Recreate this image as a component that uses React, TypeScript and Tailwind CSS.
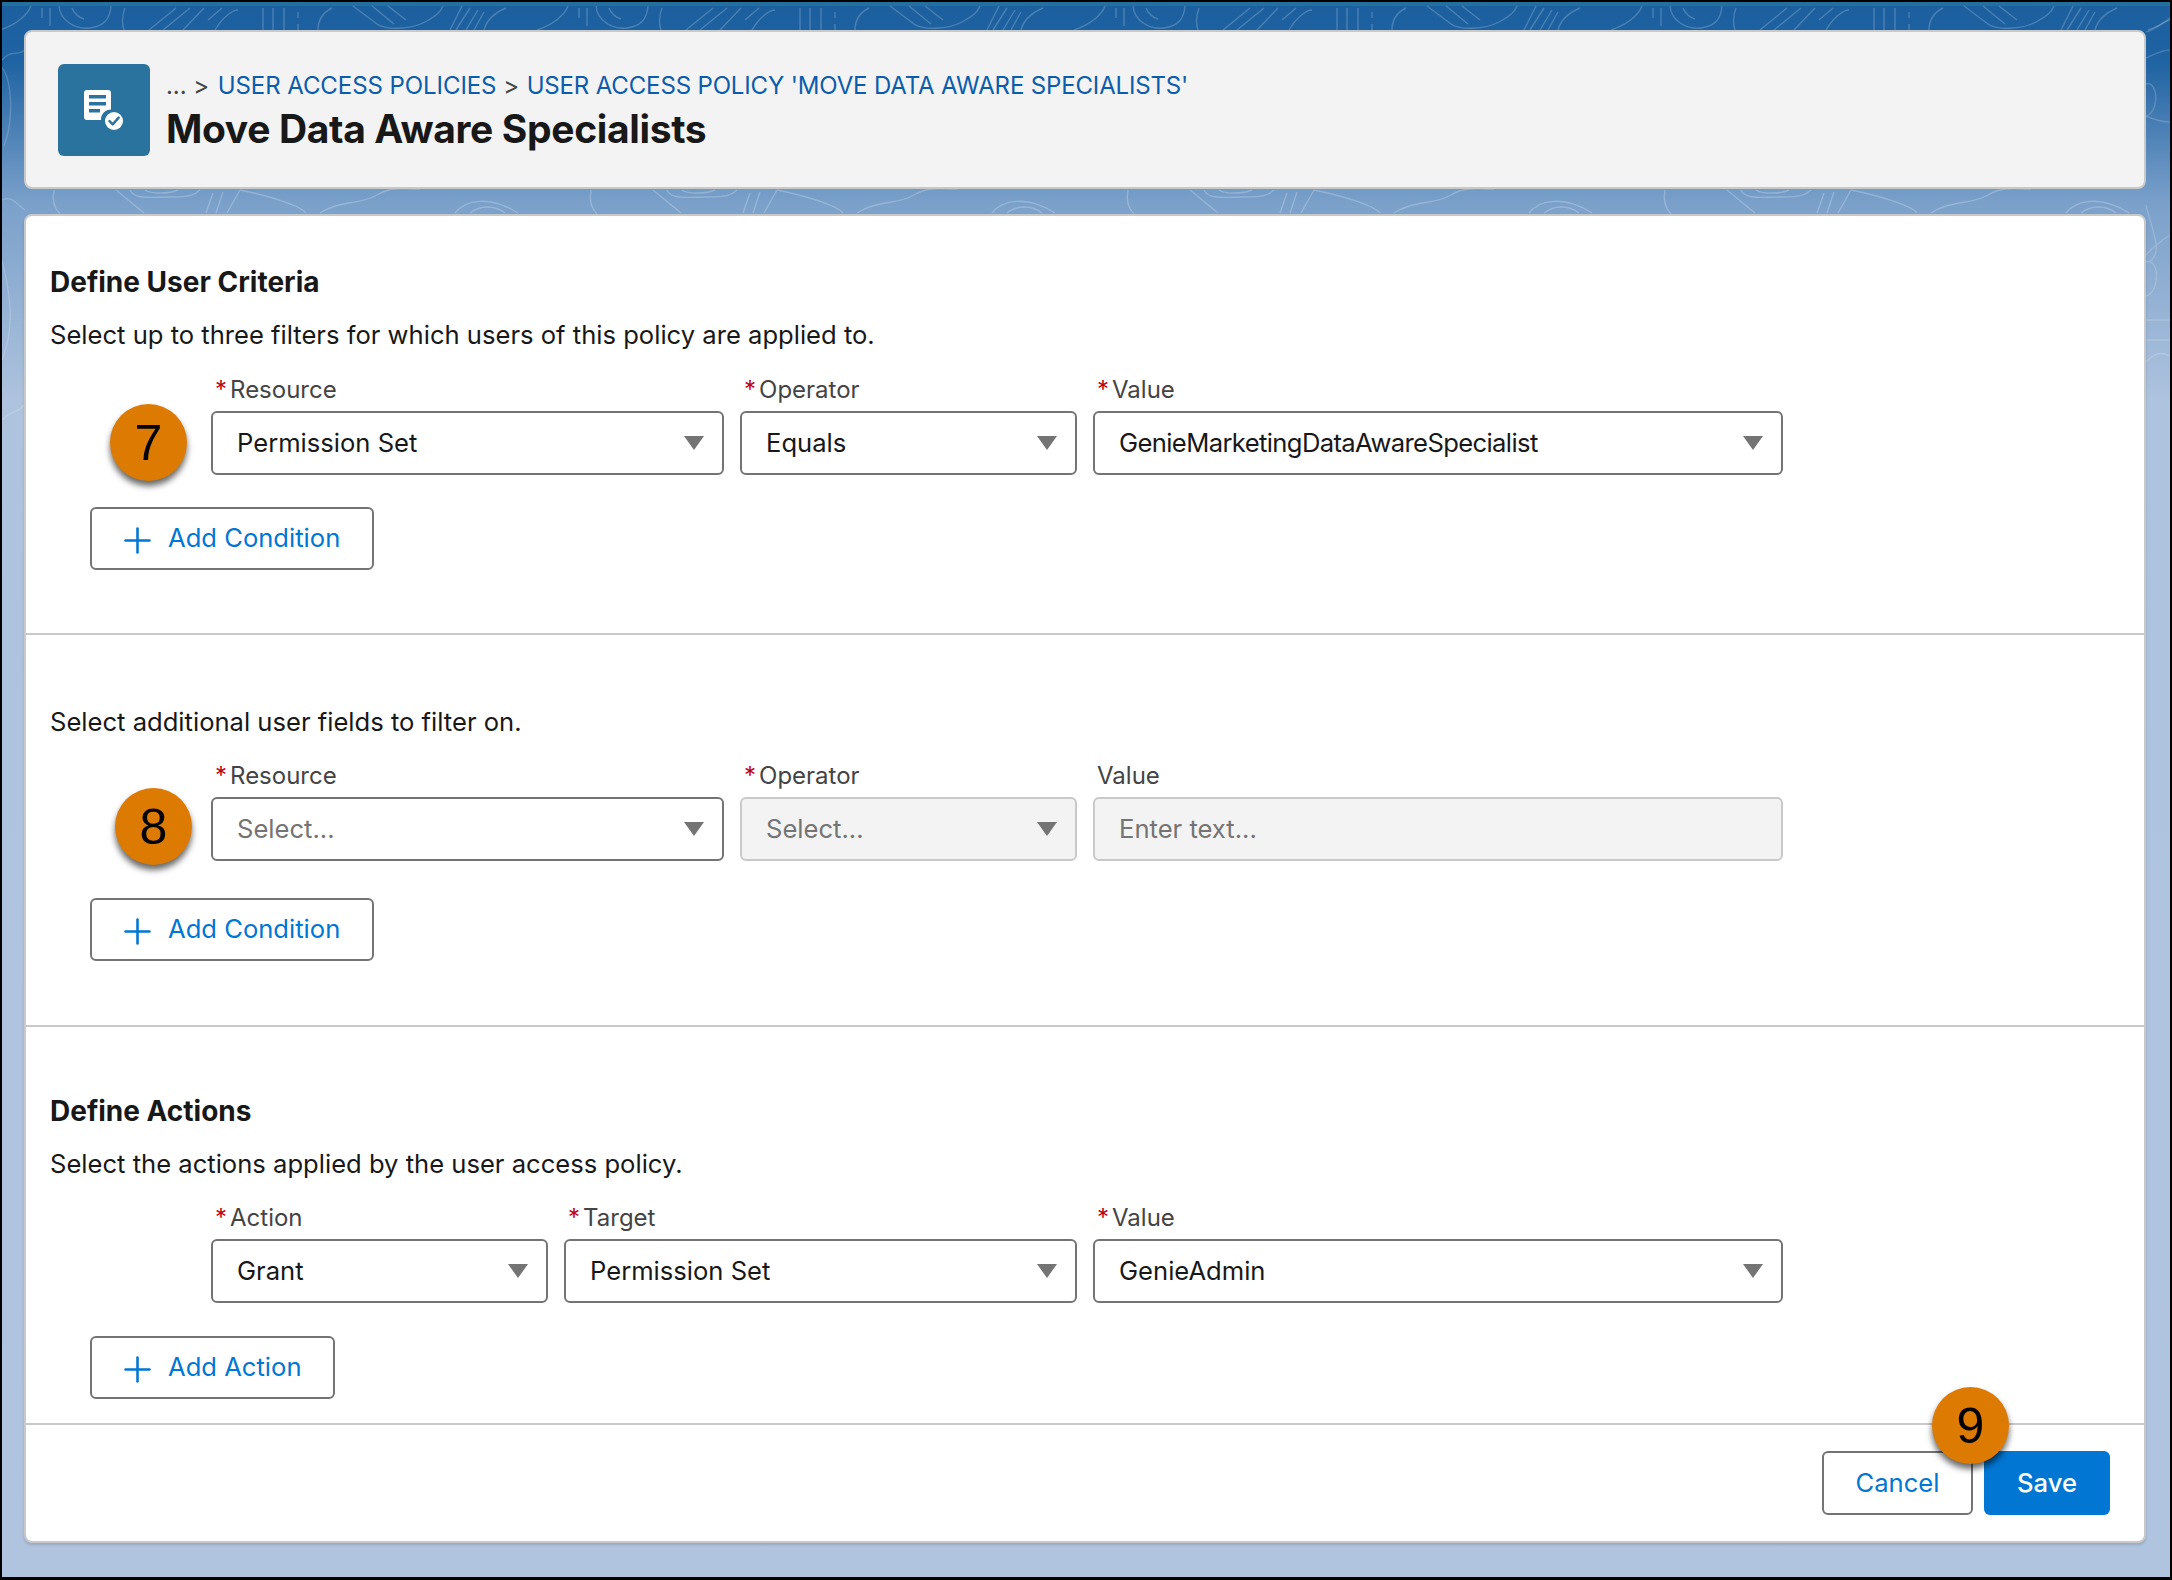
import { Plus } from "lucide-react";

const Caret = () => (
  <svg viewBox="0 0 20 14" className="h-[14px] w-[20px] shrink-0 fill-[#747474]">
    <path d="M0 0h20L10 14z" />
  </svg>
);

const Badge = ({ n, className }: { n: string; className: string }) => (
  <div className={`absolute flex h-[77px] w-[77px] items-center justify-center rounded-full bg-[#dd7a01] text-[50px] leading-none text-black shadow-[0_5px_6px_rgba(0,0,0,0.6)] font-['Liberation_Sans',sans-serif] ${className}`}>
    {n}
  </div>
);

type FieldProps = {
  label: string;
  value: string;
  width: string;
  required?: boolean;
  state?: "normal" | "placeholder" | "disabled" | "input";
  valueClass?: string;
};

const Field = ({ label, value, width, required = true, state = "normal", valueClass = "" }: FieldProps) => {
  const off = state === "disabled" || state === "input";
  return (
    <div className={width}>
      <div className="flex h-[37px] items-start pl-[4px] text-[24px] leading-[32px] text-[#444444]">
        {required && <span className="mr-[3px] text-[#ba0517]">*</span>}
        {label}
      </div>
      <div className={`flex h-[64px] items-center justify-between rounded-[6px] border-2 pl-[24px] pr-[18px] text-[25.6px] ${off ? "border-[#c9c9c9] bg-[#f3f3f3] text-[#747474]" : "border-[#747474] bg-white"} ${state === "placeholder" ? "text-[#747474]" : off ? "" : "text-[#181818]"}`}>
        <span className={valueClass}>{value}</span>
        {state !== "input" && <Caret />}
      </div>
    </div>
  );
};

const AddButton = ({ label, width }: { label: string; width: string }) => (
  <button className={`ml-[64px] flex h-[63px] items-center rounded-[6px] border-2 border-[#747474] bg-white pl-[25px] text-[25.6px] text-[#0176d3] ${width}`}>
    <Plus className="mr-[10px] h-[41px] w-[41px] translate-y-[2px]" strokeWidth={1.5} />
    {label}
  </button>
);

// faint contour lines behind the cards, tile repeats every 537px
const Topo = () => (
  <svg width="2172" height="700" fill="none" className="absolute top-[-2px] left-[-2px]">
    <defs>
      <pattern id="topo" width="537" height="700" patternUnits="userSpaceOnUse">
        <path
          stroke="rgba(255,255,255,0.2)"
          strokeWidth="1.4"
          d="M31 6C28 14 18 24 0 30M42 8V18M50 8V26M59 6C60 20 75 30 90 28S110 18 111 6M72 8C74 14 80 18 84 19M125 8C122 16 122 24 124 30M176 8L149 30M190 8L163 30M204 8L183 30M222 8L208 20M215 30C222 18 232 10 238 10M263 8V30M273 8V30M284 8V30M298 12V18M298 24V30M332 8C320 14 318 24 318 30M353 6L377 24C385 30 410 30 425 22S441 10 443 6M372 6L394 24M388 6L406 20M462 6L450 30M470 8L456 30M478 10L466 30M484 12L474 30M506 8C492 14 486 22 484 30"
        />
        <path
          stroke="rgba(255,255,255,0.22)"
          strokeWidth="1.4"
          d="M54 190C52 200 54 208 60 214M116 190L144 213M130 190C135 200 150 197 170 197S195 195 200 190M145 190C150 194 170 194 178 190M213 193L206 213M223 192L216 213M240 190L227 213M240 190C265 195 300 205 306 213M320 213C340 200 360 205 377 195S410 190 420 189M455 213C465 200 490 195 518 213M470 213C480 205 495 205 505 213"
        />
      </pattern>
    </defs>
    <rect width="2172" height="700" fill="url(#topo)" />
    <path
      stroke="rgba(255,255,255,0.18)"
      strokeWidth="1.4"
      d="M2 60C10 50 18 56 25 50M2 68C12 80 14 120 4 146M2 200C12 195 18 206 25 210M2 260C12 300 14 330 2 360M2 420C10 410 18 414 25 404M2146 32C2155 30 2162 22 2170 20M2146 58C2155 54 2162 50 2170 50M2146 84C2158 80 2160 112 2146 116C2155 120 2162 122 2170 122M2146 205C2155 240 2162 250 2150 262M2146 255C2155 245 2162 240 2170 235M2146 262C2160 258 2160 292 2146 296M2146 320H2170M2146 340H2170M2146 362C2155 352 2162 352 2170 356"
    />
  </svg>
);

export default function App() {
  return (
    <div className="relative h-[1580px] w-[2172px] overflow-hidden border-t-2 border-r-2 border-b-[3px] border-l-2 border-black bg-[linear-gradient(180deg,#1b5f9f_0px,#1f63a2_60px,#7aa0ca_200px,#aec3de_400px,#b0c4df_100%)] font-['Inter',sans-serif]">
      <div className="h-[4px] bg-[#23709f]" />
      <Topo />

      <div className="relative ml-[22px] mr-[24px] mt-[24px] flex flex-col gap-[25px]">
        {/* Header */}
        <div className="flex h-[159px] items-center rounded-[8px] border-2 border-[#c9c9c9] bg-[#f3f3f3] pl-[32px]">
          <div className="flex h-[92px] w-[92px] shrink-0 items-center justify-center rounded-[6px] bg-[#2a739e]">
            <svg viewBox="0 0 40 40" className="h-[40px] w-[40px] fill-white">
              <path d="M3 0h21a3 3 0 0 1 3 3v16.5a10 10 0 0 0-10 10.5H3a3 3 0 0 1-3-3V3a3 3 0 0 1 3-3z" />
              <path fill="#2a739e" d="M5 5h17v3.5H5zM5 12h17v3.5H5zM5 19h11v3.5H5z" />
              <circle cx="30" cy="31" r="9" />
              <path fill="none" stroke="#2a739e" strokeWidth="2.4" strokeLinecap="round" strokeLinejoin="round" d="M25.5 31l3.2 3.4 6-6.8" />
            </svg>
          </div>
          <div className="ml-[16px] mt-[2px]">
            <div className="text-[24px] leading-[36px] tracking-[-0.07px] text-[#444444]">
              ... &gt; <span className="ml-[2px] text-[#0b5cab]">USER ACCESS POLICIES</span> &gt;{" "}
              <span className="ml-[1px] tracking-[-0.15px] text-[#0b5cab]">USER ACCESS POLICY 'MOVE DATA AWARE SPECIALISTS'</span>
            </div>
            <h1 className="text-[39px] leading-[50px] font-bold tracking-[-0.35px] text-[#181818]">Move Data Aware Specialists</h1>
          </div>
        </div>

        {/* Form card */}
        <div className="h-[1329px] rounded-[8px] border-2 border-[#c9c9c9] bg-white shadow-[0_2px_3px_rgba(0,0,0,0.15)]">
          <section className="relative h-[419px] border-b-2 border-[#c9c9c9] pt-[48px]">
            <h2 className="ml-[24px] text-[28px] leading-[36px] font-bold text-[#181818]">Define User Criteria</h2>
            <p className="ml-[24px] mt-[17px] text-[25.6px] leading-[36px] text-[#181818]">Select up to three filters for which users of this policy are applied to.</p>
            <div className="ml-[185px] mt-[21px] flex gap-[16px]">
              <Field label="Resource" value="Permission Set" width="w-[513px]" />
              <Field label="Operator" value="Equals" width="w-[337px]" />
              <Field label="Value" value="GenieMarketingDataAwareSpecialist" width="w-[690px]" valueClass="tracking-[-0.62px]" />
            </div>
            <div className="mt-[32px]">
              <AddButton label="Add Condition" width="w-[284px]" />
            </div>
            <Badge n="7" className="top-[188px] left-[84px]" />
          </section>

          <section className="relative h-[392px] border-b-2 border-[#c9c9c9] pt-[69px]">
            <p className="ml-[24px] text-[25.6px] leading-[36px] text-[#181818]">Select additional user fields to filter on.</p>
            <div className="ml-[185px] mt-[20px] flex gap-[16px]">
              <Field label="Resource" value="Select..." width="w-[513px]" state="placeholder" />
              <Field label="Operator" value="Select..." width="w-[337px]" state="disabled" />
              <Field label="Value" value="Enter text..." width="w-[690px]" state="input" required={false} />
            </div>
            <div className="mt-[37px]">
              <AddButton label="Add Condition" width="w-[284px]" />
            </div>
            <Badge n="8" className="top-[153px] left-[89px]" />
          </section>

          <section className="h-[398px] border-b-2 border-[#c9c9c9] pt-[66px]">
            <h2 className="ml-[24px] text-[28px] leading-[36px] font-bold text-[#181818]">Define Actions</h2>
            <p className="ml-[24px] mt-[17px] text-[25.6px] leading-[36px] text-[#181818]">Select the actions applied by the user access policy.</p>
            <div className="ml-[185px] mt-[20px] flex gap-[16px]">
              <Field label="Action" value="Grant" width="w-[337px]" />
              <Field label="Target" value="Permission Set" width="w-[513px]" />
              <Field label="Value" value="GenieAdmin" width="w-[690px]" />
            </div>
            <div className="mt-[33px]">
              <AddButton label="Add Action" width="w-[245px]" />
            </div>
          </section>

          <footer className="relative flex justify-end gap-[11px] pt-[26px] pr-[34px]">
            <button className="h-[64px] w-[151px] rounded-[6px] border-2 border-[#747474] bg-white text-[25.6px] text-[#0176d3]">Cancel</button>
            <button className="h-[64px] w-[126px] rounded-[6px] bg-[#0176d3] text-[25.6px] font-medium text-white">Save</button>
            <Badge n="9" className="-top-[38px] right-[135px]" />
          </footer>
        </div>
      </div>
    </div>
  );
}
